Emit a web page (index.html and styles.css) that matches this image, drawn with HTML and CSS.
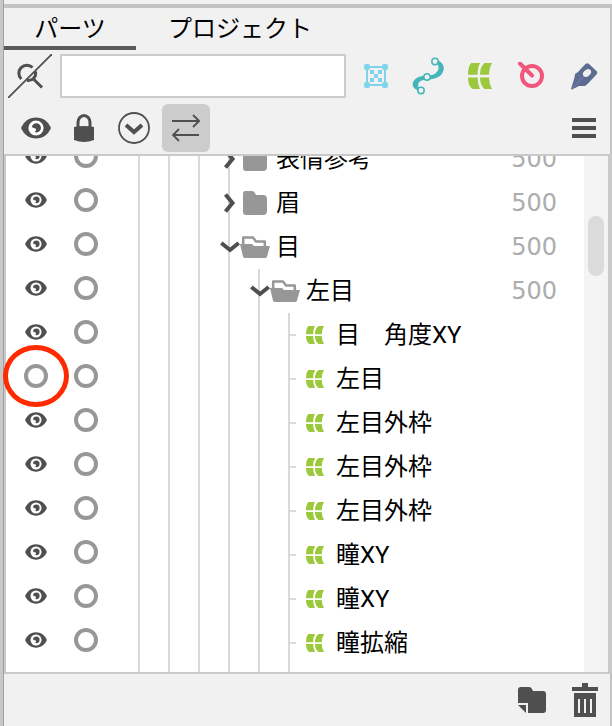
FILE: index.html
```html
<!DOCTYPE html>
<html lang="ja">
<head>
<meta charset="utf-8">
<meta name="viewport" content="width=device-width, initial-scale=1">
<title>パーツ</title>
<link rel="stylesheet" href="styles.css">
</head>
<body>
<svg class="symbols" aria-hidden="true">
  <symbol id="eye" viewBox="0 0 30 22">
    <path fill="#4f4f4f" d="M0 11C3 4.500 8 .5 15 .5S27 4.500 30 11C27 17.500 22 21.500 15 21.500S3 17.500 0 11z"/>
    <circle cx="15" cy="11" r="7.600" fill="#fff"/>
    <path fill="#4f4f4f" d="M10.800 9.500C12 7.300 13.300 6.300 15.200 6.300A4.600 4.600 0 0 1 15.500 15.500C14.500 15.500 14 15 14 14.200C15.500 13.800 15.500 11.500 13.700 11.200C12.300 11.100 11.500 10.800 10.800 9.500z"/>
  </symbol>
  <symbol id="mesh" viewBox="0 0 18 18">
    <path fill="#9cc83c" d="M2.500 0H9Q7 3.500 7.200 8.200H0Q0 2 2.500 0zM12.500 0H18Q15.800 3.500 15.800 8.200H9Q9 2.500 12.500 0zM0 10H7.200Q7.200 14.500 9 18H3.500Q0 16 0 10zM9 10H15.800Q15.800 14.500 18 18H12.500Q9 15.500 9 10z"/>
  </symbol>
  <symbol id="folder" viewBox="0 0 30 24">
    <path fill="#979797" d="M5 0H12Q14 0 15 2L16 4H23Q27 4 27 8V20Q27 24 23 24H6Q3 24 3 21V3Q3 0 5 0z"/>
  </symbol>
  <symbol id="folder-open" viewBox="0 0 30 24">
    <path fill="none" stroke="#979797" stroke-width="2.500" stroke-linejoin="round" d="M3.200 11V2.500H13L16 6.500H24.800V11"/>
    <path fill="#979797" d="M0 9H12L14 11H30L27 21.500Q26.500 23 25 23H5Q3.500 23 3 21.500z"/>
  </symbol>
  <symbol id="closed" viewBox="0 0 20 20">
    <path fill="none" stroke="#4f4f4f" stroke-width="4" d="M5.500 1.500L12.500 10L5.500 18.500"/>
  </symbol>
  <symbol id="opened" viewBox="0 0 20 20">
    <path fill="none" stroke="#4f4f4f" stroke-width="4" d="M1.300 6L10 13L18.700 6"/>
  </symbol>
</svg>

<main class="panel">
  <nav class="tabs">
    <button class="tab tab-active" type="button">パーツ</button>
    <button class="tab" type="button">プロジェクト</button>
  </nav>

  <div class="search">
    <button class="tool" type="button" aria-label="検索"><svg width="44" height="44" viewBox="0 0 44 44" fill="none" stroke="#4f4f4f">
      <path stroke-width="3" d="M13.300 25A7.500 7.500 0 0 1 24.500 13.500M27.500 17.500A7.500 7.500 0 0 1 19 26.500M25.500 25L34 33.500"/>
      <path stroke-width="1.800" d="M0 44L44 0"/>
    </svg></button>
    <input class="query" type="text" aria-label="検索">
    <div class="filters">
      <button class="filter" type="button" aria-label="ワープ"><svg width="24" height="24" viewBox="0 0 24 24" fill="#7fd4ec">
        <rect x="3" y="3" width="18" height="18" fill="none" stroke="#7fd4ec" stroke-width="2"/>
        <rect width="6" height="6" rx="2"/><rect x="18" width="6" height="6" rx="2"/><rect y="18" width="6" height="6" rx="2"/><rect x="18" y="18" width="6" height="6" rx="2"/>
        <path d="M6 6h4v4h4V6h4v4h-4v4h4v4h-4v-4h-4v4H6v-4h4v-4H6z"/>
      </svg></button>
      <button class="filter" type="button" aria-label="パス"><svg width="32" height="38" viewBox="0 0 32 38">
        <path fill="#43b5bb" d="M25 3C32 6 34 12 29 18C25 22 20 22 15 22.500C9 23 5 25 6.500 30L8 34C-1 32-1 25 4 21.500C9 18 12 19 17 18.500C23 18 27 14 26.500 10C26.300 7 25 5 23 5z"/>
        <g fill="#f1f1f1" stroke="#43b5bb" stroke-width="1.500"><circle cx="23" cy="4.500" r="3.200"/><circle cx="15" cy="20" r="3.200"/><circle cx="9" cy="33.500" r="3.200"/></g>
      </svg></button>
      <button class="filter" type="button" aria-label="アートメッシュ"><svg width="24" height="26" viewBox="0 0 18 18" preserveAspectRatio="none"><use href="#mesh"/></svg></button>
      <button class="filter" type="button" aria-label="回転"><svg width="28" height="28" viewBox="0 0 28 28" fill="none" stroke="#f2567a" stroke-width="4" stroke-linecap="round">
        <circle cx="14" cy="14" r="10"/><path d="M2 1.500L14 13.500"/>
      </svg></button>
      <button class="filter" type="button" aria-label="ペン"><svg width="28" height="28" viewBox="0 0 28 28">
        <path fill="#5f6c92" d="M1 27L4.500 15.500L5 12L8 10L14 3.500Q17 0 19 2L27 9.500Q28 11 26 13L18 21.500L15 24L9 24L2 27.500z"/>
        <ellipse cx="17" cy="11" rx="4.500" ry="3.200" fill="#f1f1f1" transform="rotate(-40 17 11)"/>
        <path d="M14 14L3 25.500" stroke="#8d97b3" stroke-width=".6"/>
      </svg></button>
    </div>
  </div>

  <div class="toolbar">
    <button class="tool" type="button" aria-label="表示"><svg width="30" height="22"><use href="#eye"/></svg></button>
    <button class="tool" type="button" aria-label="ロック"><svg width="20" height="28" viewBox="0 0 20 28">
      <path fill="none" stroke="#4f4f4f" stroke-width="3" d="M4 15V8.500A6 7 0 0 1 16 8.500V15"/><path fill="#4f4f4f" d="M0 13Q10 11 20 13V26Q10 30 0 26z"/>
    </svg></button>
    <button class="tool" type="button" aria-label="展開"><svg width="32" height="32" viewBox="0 0 32 32" fill="none" stroke="#4f4f4f">
      <circle cx="16" cy="16" r="15" stroke-width="1.800"/><path stroke-width="4" d="M8 13L16 20L24 13"/>
    </svg></button>
    <button class="tool tool-on" type="button" aria-label="切り替え" aria-pressed="true"><svg width="28" height="28" viewBox="0 0 28 28" fill="none" stroke="#4f4f4f" stroke-width="1.800">
      <path d="M0 7H27M21 1L27.200 7L21 13M27 21H1M7 15L1 21L7 27"/>
    </svg></button>
    <button class="menu" type="button" aria-label="メニュー"><svg width="24" height="20" viewBox="0 0 24 20"><path fill="#4f4f4f" d="M0 0h24v4H0zM0 8h24v4H0zM0 16h24v4H0z"/></svg></button>
  </div>

  <section class="tree">
    <ul class="rows" id="rows"></ul>
    <div class="track"><div class="thumb"></div></div>
  </section>

  <footer class="actions">
    <button class="action" type="button" aria-label="新規フォルダ"><svg width="28" height="26" viewBox="0 0 28 26" fill="#4f4f4f">
      <path d="M3 0H11Q13 0 14 2L15 4H25Q28 4 28 7V23Q28 26 25 26H10V16H0V3Q0 0 3 0z"/><path d="M0 18H8V26z"/>
    </svg></button>
    <button class="action" type="button" aria-label="削除"><svg width="26" height="34" viewBox="0 0 26 34" fill="#4f4f4f">
      <path d="M10 0h6v4h10v4H0V4h10zM2 10h22v24H2z"/><path fill="#f1f1f1" d="M6 16h2v14H6zM12 16h2v14h-2zM18 16h2v14h-2z"/>
    </svg></button>
  </footer>
</main>
<script src="tree.js"></script>
</body>
</html>
```
FILE: styles.css
```css
* {
  box-sizing: border-box;
}

body {
  margin: 0;
  background: #f1f1f1;
  color: #000;
  font: 24px/32px Roboto, "Noto Sans CJK JP", sans-serif;
}

button {
  display: flex;
  align-items: center;
  justify-content: center;
  padding: 0;
  border: 0;
  background: none;
  color: inherit;
  font: inherit;
}

svg {
  display: block;
  flex: none;
}

.symbols {
  position: absolute;
  width: 0;
  height: 0;
}

.panel {
  display: flex;
  flex-direction: column;
  min-height: 100vh;
  margin-left: 3px;
  padding-top: 4px;
  border-left: 1px solid #a0a0a0;
  box-shadow: -3px 0 #c8c8c8;
}

.tabs {
  display: flex;
  height: 46px;
  border-top: 4px solid #c3c3c3;
  border-right: 2px solid #c3c3c3;
}

.tab {
  padding: 4px 32px 0;
  border-bottom: 4px solid transparent;
}

.tab-active {
  width: 132px;
  padding: 4px 0 0;
  border-color: #5a5a5a;
}

.search,
.toolbar,
.actions {
  display: flex;
  align-items: center;
  border-right: 2px solid #c3c3c3;
}

.search {
  height: 52px;
  padding-left: 4px;
}

.search .tool {
  width: 44px;
}

.query {
  flex: 1;
  min-width: 0;
  height: 44px;
  margin: 0 4px 0 8px;
  padding: 0 8px;
  border: 2px solid #ccc;
  border-radius: 0;
  background: #fff;
  font: inherit;
}

.filters {
  display: flex;
}

.filter {
  width: 52px;
  height: 44px;
}

.toolbar {
  height: 52px;
  padding: 0 14px 0 8px;
}

.tool {
  width: 48px;
  height: 48px;
}

.toolbar .tool:nth-child(n + 3) {
  margin-left: 2px;
}

.toolbar .tool-on:nth-child(n + 3) {
  margin-left: 4px;
}

.tool-on {
  border-radius: 6px;
  background: #ccc;
}

.menu {
  margin-left: auto;
}

.tree {
  display: flex;
  flex: 1;
  border: 2px solid #c9c9c9;
  border-right-width: 4px;
  background: #fff;
}

.rows {
  flex: 1;
  min-width: 0;
  margin: 0;
  padding: 0;
  list-style: none;
  clip-path: inset(0 -4px);
}

.row {
  display: flex;
  align-items: center;
  height: 44px;
  padding-left: 5px;
}

.row:first-child {
  margin-top: -19px;
}

.row-end {
  height: 7px;
}

.toggles {
  display: flex;
  width: 127px;
  padding-bottom: 6px;
}

.toggle {
  position: relative;
  width: 50px;
  height: 40px;
}

.ring {
  width: 24px;
  height: 24px;
  border: 4px solid #979797;
  border-radius: 50%;
}

.mark {
  position: absolute;
  top: -11px;
  left: -8px;
  width: 66px;
  height: 62px;
  border: 5px solid #ff2a00;
  border-radius: 50%;
}

.guide {
  position: relative;
  width: 30px;
  height: 100%;
  border-left: 2px solid #d9d9d9;
}

.guide-folder {
  width: 12px;
}

.guide-leaf {
  display: flex;
  align-items: center;
  width: 18px;
}

.tick {
  width: 6px;
  height: 2px;
  background: #d9d9d9;
}

.chevron {
  position: absolute;
  top: 12px;
  left: -10px;
}

.name {
  margin-left: 6px;
  white-space: nowrap;
}

.name-leaf {
  margin-left: 12px;
}

.order {
  margin-left: auto;
  padding-right: 27px;
  color: #adadad;
  font-family: "DejaVu Sans", sans-serif;
}

.track {
  width: 24px;
  padding: 60px 4px 0;
  background: #f4f4f4;
}

.thumb {
  height: 60px;
  border-radius: 8px;
  background: #dbdbdb;
}

.actions {
  justify-content: flex-end;
  gap: 26px;
  height: 52px;
  padding-right: 12px;
}
```
FILE: tree.js
```javascript
const items = [
  { name: "表情参考", depth: 4, icon: "folder", arrow: "closed" },
  { name: "眉", depth: 4, icon: "folder", arrow: "closed" },
  { name: "目", depth: 4, icon: "folder-open", arrow: "opened" },
  { name: "左目", depth: 5, icon: "folder-open", arrow: "opened" },
  { name: "目　角度XY", depth: 6 },
  { name: "左目", depth: 6, hidden: true },
  { name: "左目外枠", depth: 6 },
  { name: "左目外枠", depth: 6 },
  { name: "左目外枠", depth: 6 },
  { name: "瞳XY", depth: 6 },
  { name: "瞳XY", depth: 6 },
  { name: "瞳拡縮", depth: 6 }
];

const guides = (count) => '<span class="guide"></span>'.repeat(count);

const row = (item) => {
  const visibility = item.hidden
    ? '<span class="ring"></span><span class="mark"></span>'
    : '<svg width="22" height="16"><use href="#eye"/></svg>';
  const toggles = `<div class="toggles">
    <button class="toggle" type="button" aria-label="表示">${visibility}</button>
    <button class="toggle" type="button" aria-label="ロック"><span class="ring"></span></button>
  </div>`;
  const label = item.icon
    ? `<span class="guide guide-folder"><svg class="chevron" width="20" height="20"><use href="#${item.arrow}"/></svg></span>
       <svg width="30" height="24"><use href="#${item.icon}"/></svg>
       <span class="name">${item.name}</span><span class="order">500</span>`
    : `<span class="guide guide-leaf"><span class="tick"></span></span>
       <svg width="18" height="18"><use href="#mesh"/></svg>
       <span class="name name-leaf">${item.name}</span>`;
  return `<li class="row">${toggles}${guides(item.depth - 1)}${label}</li>`;
};

document.getElementById("rows").innerHTML =
  items.map(row).join("") +
  `<li class="row row-end" aria-hidden="true"><div class="toggles"></div>${guides(6)}</li>`;
```
